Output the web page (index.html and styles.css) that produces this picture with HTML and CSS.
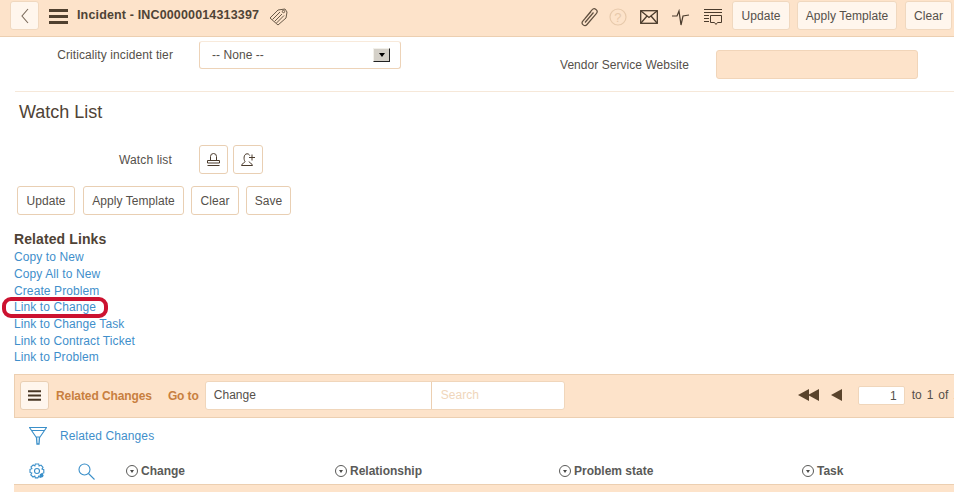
FILE: index.html
```html
<!DOCTYPE html>
<html lang="en">
<head>
<meta charset="utf-8">
<title>Incident</title>
<link rel="stylesheet" href="styles.css">
</head>
<body>
<header class="topbar">
  <button class="btn back"><svg width="10" height="16" viewBox="0 0 10 16"><path d="M8 1 2 8l6 7" fill="none" stroke="#7a6a5a" stroke-width="1.100"/></svg></button>
  <svg class="menu" width="19" height="15" viewBox="0 0 19 15"><path d="M0 1.500h19M0 7.500h19M0 13.500h19" stroke="#50402f" stroke-width="3"/></svg>
  <span class="title">Incident - INC00000014313397</span>
  <svg class="tag" width="19" height="18" viewBox="0 0 19 18" fill="none" stroke="#6a5a48" stroke-width="1"><path d="M1 10 9 2l7-1 2 3-1 6-8 7z"/><path d="M3.500 11.500 11 4M5.500 13.500 13 6M7.500 15 15 7.500"/><circle cx="14.500" cy="3.500" r="1.200"/></svg>
  <div class="spacer"></div>
  <svg class="ti clip" width="19" height="21" viewBox="0 0 19 21" fill="none" stroke="#5f4f3f" stroke-width="1.200"><path d="M5 12.500 12 4a2.800 2.800 0 0 1 4.500 3.400L7 18.500a2.700 2.700 0 0 1-4.200-3.400L11 5.500"/><path d="M13.500 6.500 5 16.500"/></svg>
  <svg class="ti help" width="18" height="18" viewBox="0 0 18 18"><circle cx="9" cy="9" r="8" fill="none" stroke="#e7c9ab" stroke-width="1.200"/><text x="9" y="13.500" text-anchor="middle" class="qmark">?</text></svg>
  <svg class="ti mail" width="18" height="14" viewBox="0 0 18 14" fill="none" stroke="#4a3b2c" stroke-width="1.300"><rect x=".7" y=".7" width="16.600" height="12.600"/><path d="m1 1 8 6.500L17 1M1 13l6-7M17 13l-6-7"/></svg>
  <svg class="ti pulse" width="18" height="17" viewBox="0 0 18 17" fill="none" stroke="#4a3b2c" stroke-width="1.200"><path d="M0 7h5l2-5 2 14 2-9 6-1"/></svg>
  <svg class="ti feed" width="18" height="17" viewBox="0 0 18 17" fill="none" stroke="#4a3b2c" stroke-width="1"><path d="M0 .500h18M0 3.500h18M0 6.500h5M0 9.500h5M0 12.500h5M6.500 6.500h11v7h-4l-1.500 2-1.500-2h-4z"/></svg>
  <button class="btn w58">Update</button>
  <button class="btn w100">Apply Template</button>
  <button class="btn w47">Clear</button>
</header>

<main>
  <section class="form-row">
    <label class="crit-label">Criticality incident tier</label>
    <div class="select"><span>-- None --</span><i class="arrow"></i></div>
    <label class="vendor-label">Vendor Service Website</label>
    <div class="vendor-input"></div>
  </section>

  <h2 class="section-title">Watch List</h2>

  <div class="watch-row">
    <label class="watch-label">Watch list</label>
    <button class="btn icon first"><svg width="13" height="13" viewBox="0 0 13 13" fill="none" stroke="#4a3b2c" stroke-width="1"><path d="M3.500 7V3.500a3 3 0 0 1 6 0V7M.5 7.500h12v2.500H.5zM.5 12.500h12"/></svg></button>
    <button class="btn icon second"><svg width="14" height="13" viewBox="0 0 14 13" fill="none" stroke="#4a3b2c" stroke-width="1"><path d="M.5 12.500h11c0-2-3.500-2.500-3.500-4M.5 12.500c0-2 3.500-2.500 3.500-4C2.500 6.500 2.500 1 6 .8c1.500 0 2.300.7 2.700 1.700M11 1.500v6M8 4.500h6"/></svg></button>
  </div>

  <div class="action-row">
    <button class="btn w58">Update</button>
    <button class="btn w101">Apply Template</button>
    <button class="btn w48">Clear</button>
    <button class="btn w45">Save</button>
  </div>

  <section class="related">
    <h3>Related Links</h3>
    <a>Copy to New</a>
    <a>Copy All to New</a>
    <a>Create Problem</a>
    <a class="highlighted">Link to Change</a>
    <a>Link to Change Task</a>
    <a>Link to Contract Ticket</a>
    <a>Link to Problem</a>
  </section>

  <section class="listbar">
    <button class="btn menu-btn"><svg width="13" height="11" viewBox="0 0 13 11"><path d="M0 1.200h13M0 5.500h13M0 9.800h13" stroke="#483725" stroke-width="2"/></svg></button>
    <strong class="list-name">Related Changes</strong>
    <strong class="goto">Go to</strong>
    <div class="search">
      <span class="search-field">Change</span>
      <span class="search-text">Search</span>
    </div>
    <div class="pager">
      <svg class="first-page" width="21" height="12" viewBox="0 0 21 12"><path d="M11 0v12L0 6zM21 0v12L10 6z" fill="#5a442c"/></svg>
      <svg class="prev-page" width="11" height="12" viewBox="0 0 11 12"><path d="M11 0v12L0 6z" fill="#5a442c"/></svg>
      <div class="page-input">1</div>
      <span class="page-text">to 1 of 1</span>
    </div>
  </section>

  <div class="filter-row">
    <svg width="18" height="20" viewBox="0 0 18 20" fill="none" stroke="#3a8fc9" stroke-width="1.100"><path d="M.5 1.500h17L11 11H7zM2.500 4.500h13"/><path d="M7.500 11l.5 7h2l.5-7" stroke-width="1.300"/></svg>
    <a>Related Changes</a>
  </div>

  <div class="col-row">
    <svg class="gear" width="16" height="16" viewBox="0 0 16 16" fill="none" stroke="#3a8fc9" stroke-width="1.100"><path d="M6.300 1h3.400l.4 1.900 1.900-.8 2 2.200-1 1.600 1.800.8v3.200l-1.900.6.700 1.900-2.300 2-1.600-1.200-.9 1.700H6.300l-.5-1.800-1.800.9-2.200-2.200 1-1.700-1.800-.7V6.300l1.900-.6-.9-1.800L4.200 2l1.700.9z"/><circle cx="8" cy="8" r="2.500"/><circle cx="12.500" cy="12.500" r="2" fill="#3a8fc9" stroke="none"/></svg>
    <svg class="magnifier" width="17" height="17" viewBox="0 0 17 17" fill="none" stroke="#3a8fc9" stroke-width="1.100"><circle cx="6.500" cy="6.500" r="5.500"/><path d="m10.500 10.500 6 6"/></svg>
    <span class="col c1"><i class="sort"></i>Change</span>
    <span class="col c2"><i class="sort"></i>Relationship</span>
    <span class="col c3"><i class="sort"></i>Problem state</span>
    <span class="col c4"><i class="sort"></i>Task</span>
  </div>
  <div class="band"></div>
</main>
</body>
</html>
```
FILE: styles.css
```css
* { box-sizing: border-box; }
html, body { margin: 0; height: 492px; overflow: hidden; }
body { background: #fff; color: #55504a; font: 12px "Liberation Sans", Arial, sans-serif; letter-spacing: .05px; position: relative; }
button { font: inherit; letter-spacing: inherit; }

.btn {
  height: 29px; padding: 0; background: #fff; color: #55504a;
  border: 1px solid #e9cfb3; border-radius: 3px; font-size: 12px;
  display: flex; align-items: center; justify-content: center; flex: none;
}
.w47 { width: 47px; } .w48 { width: 48px; } .w45 { width: 45px; }
.w58 { width: 58px; } .w100 { width: 100px; } .w101 { width: 101px; }

.topbar {
  height: 37px; background: #fde3ca; border-bottom: 1px solid #eccfb1;
  display: flex; align-items: flex-start; padding: 1px 2px 0 10px;
}
.topbar .btn { background: #fff6ed; border-color: #f0d8bf; }
.back { width: 29px; }
.menu { margin: 8px 0 0 10px; flex: none; }
.title { margin: 6px 0 0 9px; font-size: 12.500px; line-height: 17px; font-weight: 700; letter-spacing: .15px; color: #4f4336; white-space: nowrap; }
.tag { margin: 7px 0 0 10px; flex: none; }
.spacer { flex: 1; }
.ti { flex: none; }
.clip { margin-top: 5px; }
.help { margin: 7px 0 0 10px; }
.qmark { font: 13px "Liberation Sans", sans-serif; fill: #e7c9ab; }
.mail { margin: 9px 0 0 13px; }
.pulse { margin: 8px 0 0 14px; }
.feed { margin: 8px 10px 0 14px; }
.topbar .w100 { margin: 0 8px 0 7px; }

.form-row {
  height: 55px; border-bottom: 1px solid #f6e8d9; margin-left: 15px;
  display: flex; align-items: flex-start;
}
.crit-label { width: 158px; margin-top: 11px; text-align: right; line-height: 14px; letter-spacing: .1px; }
.select {
  width: 202px; height: 28px; margin: 4px 0 0 26px; padding: 0 10px 0 12px;
  background: #fff; border: 1px solid #edd3b8; border-top-color: #f8eadb; border-radius: 3px;
  display: flex; align-items: center; justify-content: space-between;
}
.arrow {
  width: 17px; height: 14px; background: #d4d0c8; border: 1px solid; border-color: #f2f0ea #222 #222 #f2f0ea;
  position: relative; display: block;
}
.arrow::after {
  content: ""; position: absolute; left: 5px; top: 4px;
  border: 3px solid transparent; border-top: 4px solid #000; border-bottom: 0;
}
.vendor-label { margin: 21px 0 0 159px; line-height: 14px; white-space: nowrap; }
.vendor-input {
  width: 202px; height: 29px; margin: 13px 0 0 27px;
  background: #fde3ca; border: 1px solid #f1d5b9; border-radius: 3px;
}

.section-title { margin: 10px 0 0 19px; height: 21px; font-size: 18px; line-height: 21px; font-weight: 400; letter-spacing: 0; color: #4f4336; }

.watch-row { display: flex; align-items: center; margin-top: 22px; height: 29px; }
.watch-label { width: 172px; text-align: right; letter-spacing: .15px; }
.icon { width: 29px; }
.first { margin-left: 27px; }
.second { margin-left: 5px; width: 30px; }

.action-row { display: flex; gap: 7px; margin: 12px 0 0 17px; }
.action-row .w58 { margin-right: 1px; }

.related { margin: 16px 0 0 14px; display: flex; flex-direction: column; align-items: flex-start; }
.related h3 { margin: 0; font-size: 14px; line-height: 16px; font-weight: 700; color: #4f4336; letter-spacing: .1px; }
.related a { height: 16.700px; line-height: 16.700px; color: #3f8fcb; font-size: 12px; letter-spacing: .1px; white-space: nowrap; position: relative; }
.related h3 + a { margin-top: 2.300px; }
.highlighted::after {
  content: ""; box-sizing: border-box; position: absolute; left: -12px; top: -2px; width: 106px; height: 21px;
  border: 4px solid #cc1230; border-radius: 9px;
}

.listbar {
  height: 44px; margin: 7.700px 0 0 14px; padding: 6px 0 0 5px; background: #fde3ca;
  border: 1px solid #eccfb1; border-right: 0;
  display: flex; align-items: flex-start; overflow: hidden;
}
.menu-btn { width: 29px; background: #fff6ed; }
.list-name { margin: 8px 0 0 7px; color: #c87f3f; line-height: 14px; letter-spacing: -.1px; white-space: nowrap; }
.goto { margin: 8px 0 0 16px; color: #c87f3f; line-height: 14px; letter-spacing: -.1px; white-space: nowrap; }
.search {
  width: 360px; height: 29px; margin-left: 6px; flex: none;
  background: #fff; border: 1px solid #f0d6bb; border-radius: 3px; display: flex;
}
.search-field { width: 226px; padding-left: 8px; line-height: 26px; border-right: 1px solid #eccfb1; }
.search-text { padding-left: 9px; line-height: 26px; color: #f0d6bb; }
.pager { display: flex; align-items: flex-start; margin-left: 233px; flex: none; }
.first-page { margin-top: 8px; }
.prev-page { margin: 8px 0 0 12px; }
.page-input {
  width: 47px; height: 19px; margin: 5px 0 0 16px; padding-right: 7px; text-align: right; line-height: 18px;
  background: #fff; border: 1px solid #f0d6bb; border-radius: 2px;
}
.page-text { margin: 7px 0 0 7px; white-space: nowrap; line-height: 14px; word-spacing: 1.500px; }

.filter-row { height: 20px; margin: 8px 0 0 29px; display: flex; align-items: center; }
.filter-row a { margin-left: 13px; color: #3f8fcb; letter-spacing: .1px; }

.col-row { position: relative; height: 17px; margin-top: 17px; }
.col-row svg, .col { position: absolute; top: 0; }
.gear { left: 29px; }
.magnifier { left: 78px; }
.col { display: flex; align-items: center; height: 16px; font-weight: 700; color: #5a5a58; letter-spacing: 0; white-space: nowrap; }
.sort {
  width: 12px; height: 12px; margin-right: 3px; border: 1px solid #5a5a58; border-radius: 50%; position: relative; display: block;
}
.sort::after {
  content: ""; position: absolute; left: 3px; top: 4px;
  border: 2px solid transparent; border-top: 3px solid #4a4a48; border-bottom: 0;
}
.c1 { left: 126px; } .c2 { left: 335px; } .c3 { left: 559px; } .c4 { left: 802px; }

.band { height: 10px; margin: 4px 0 0 14px; background: #fde3ca; border-top: 1px solid #eccfb1; }
```
